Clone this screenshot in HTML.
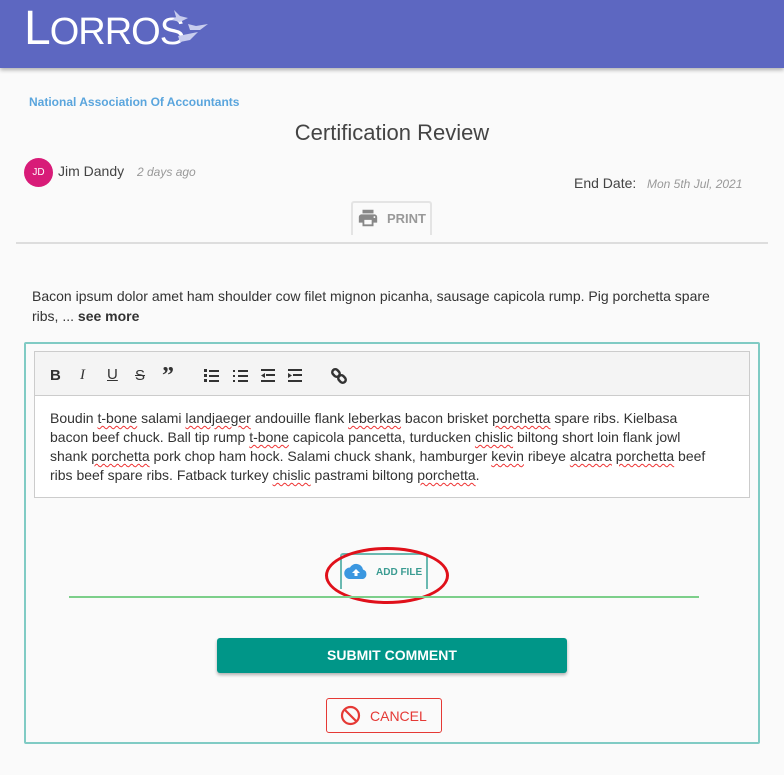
<!DOCTYPE html>
<html><head><meta charset="utf-8"><style>
*{box-sizing:border-box}
body{margin:0;width:784px;height:775px;background:#fafafa;font-family:"Liberation Sans",sans-serif;position:relative;overflow:hidden;color:#333}
.abs{position:absolute}
.hdr{left:0;top:0;width:784px;height:68px;background:#5d67c1;box-shadow:0 2px 4px rgba(0,0,0,.3)}
.logo{left:24px;top:8px;color:#fff;font-family:"Liberation Sans",sans-serif;font-size:38px;letter-spacing:-1px;line-height:42px}
.sp{text-decoration:underline wavy #e33;text-decoration-thickness:1px;text-underline-offset:2px}
</style></head><body>
<div class="abs hdr"></div>
<div class="abs logo"><span style="font-size:48px;font-weight:normal">L</span>ORROS</div>
<svg class="abs" style="left:168px;top:6px" width="46" height="40" viewBox="0 0 46 40" fill="#c8cdee">
<path d="M6 4 L12 10 L20 12 L12 16 L4 14 L8 11 Z"/><path d="M20 18 L28 20 L40 18 L32 24 L22 24 Z"/><path d="M10 30 L20 28 L30 26 L22 34 L12 36 Z"/></svg>
<div class="abs" style="left:29px;top:95px;font-size:12px;font-weight:bold;color:#5aa5dd">National Association Of Accountants</div>
<div class="abs" style="left:0;width:784px;top:120px;text-align:center;font-size:22px;color:#444">Certification Review</div>
<div class="abs" style="left:24px;top:158px;width:29px;height:29px;border-radius:50%;background:#d81b78;color:#fff;font-size:10px;line-height:29px;text-align:center">JD</div>
<div class="abs" style="left:58px;top:163px;font-size:14px;color:#444">Jim Dandy</div>
<div class="abs" style="left:137px;top:165px;font-size:12px;color:#999;font-style:italic">2 days ago</div>
<div class="abs" style="left:574px;top:175px;font-size:14px;color:#444">End Date:</div>
<div class="abs" style="left:647px;top:177px;font-size:12px;color:#999;font-style:italic">Mon 5th Jul, 2021</div>
<div class="abs" style="left:351px;top:201px;width:81px;height:34px;border:2px solid #e4e4e4;border-bottom:none;border-radius:3px 3px 0 0"></div>
<svg class="abs" style="left:357px;top:207px" width="22" height="22" viewBox="0 0 24 24" fill="#888"><path d="M19 8H5c-1.660 0-3 1.34-3 3v6h4v4h12v-4h4v-6c0-1.66-1.34-3-3-3zm-3 11H8v-5h8v5zm3-7c-.55 0-1-.45-1-1s.45-1 1-1 1 .45 1 1-.45 1-1 1zm-1-9H6v4h12V3z"/></svg>
<div class="abs" style="left:387px;top:211px;font-size:13px;color:#999;font-weight:bold">PRINT</div>
<div class="abs" style="left:16px;top:242px;width:752px;height:2px;background:#ddd"></div>
<div class="abs" style="left:32px;top:286px;width:700px;font-size:14px;line-height:20px;color:#333">Bacon ipsum dolor amet ham shoulder cow filet mignon picanha, sausage capicola rump. Pig porchetta spare ribs, ... <b>see more</b></div>
<div class="abs" style="left:24px;top:342px;width:736px;height:402px;border:2px solid #80cbc4;border-radius:2px"></div>
<div class="abs" style="left:34px;top:351px;width:716px;height:147px;border:1px solid #ccc;background:#fff"></div>
<div class="abs" style="left:35px;top:352px;width:714px;height:44px;background:#f4f4f4;border-bottom:1px solid #ccc"></div>
<div class="abs" style="left:50px;top:367px;font-size:15px;font-weight:bold;color:#333">B</div>
<div class="abs" style="left:80px;top:367px;font-size:15px;font-style:italic;color:#333;font-family:'Liberation Serif',serif">I</div>
<div class="abs" style="left:107px;top:366px;font-size:15px;text-decoration:underline;color:#333">U</div>
<div class="abs" style="left:135px;top:367px;font-size:15px;text-decoration:line-through;color:#333">S</div>
<div class="abs" style="left:162px;top:363px;font-size:24px;font-weight:bold;color:#333;font-family:'Liberation Serif',serif">”</div>
<svg class="abs" style="left:204px;top:368px" width="110" height="16" fill="#333">
<rect x="5" y="2" width="10" height="2"/><rect x="5" y="7" width="10" height="2"/><rect x="5" y="12" width="10" height="2"/><rect x="0" y="1" width="3" height="3"/><rect x="0" y="6" width="3" height="3"/><rect x="0" y="11" width="3" height="3"/>
<rect x="34" y="2" width="10" height="2"/><rect x="34" y="7" width="10" height="2"/><rect x="34" y="12" width="10" height="2"/><rect x="29" y="2" width="2" height="2"/><rect x="29" y="7" width="2" height="2"/><rect x="29" y="12" width="2" height="2"/>
<rect x="57" y="1" width="14" height="2"/><rect x="62" y="6" width="9" height="2"/><rect x="57" y="12" width="14" height="2"/><path d="M57 7.5 L61 5 V10Z"/>
<rect x="84" y="1" width="14" height="2"/><rect x="89" y="6" width="9" height="2"/><rect x="84" y="12" width="14" height="2"/><path d="M88 7.5 L84 5 V10Z"/></svg>
<svg class="abs" style="left:331px;top:368px" width="16" height="16" viewBox="0 0 16 16" fill="none" stroke="#333" stroke-width="2.5"><rect x="1" y="2" width="8" height="6" rx="3" transform="rotate(45 5 5)"/><rect x="7" y="8" width="8" height="6" rx="3" transform="rotate(45 11 11)"/></svg>
<div class="abs" style="left:50px;top:409px;width:668px;font-size:14px;line-height:19px;color:#333">Boudin <span class="sp">t-bone</span> salami <span class="sp">landjaeger</span> andouille flank <span class="sp">leberkas</span> bacon brisket <span class="sp">porchetta</span> spare ribs. Kielbasa bacon beef chuck. Ball tip rump <span class="sp">t-bone</span> capicola pancetta, turducken <span class="sp">chislic</span> biltong short loin flank jowl shank <span class="sp">porchetta</span> pork chop ham hock. Salami chuck shank, hamburger <span class="sp">kevin</span> ribeye <span class="sp">alcatra</span> <span class="sp">porchetta</span> beef ribs beef spare ribs. Fatback turkey <span class="sp">chislic</span> pastrami biltong <span class="sp">porchetta</span>.</div>
<div class="abs" style="left:340px;top:553px;width:88px;height:36px;border:2px solid #6ab9b1;border-bottom:none;border-radius:3px 3px 0 0"></div>
<svg class="abs" style="left:344px;top:562px" width="24" height="18" viewBox="0 0 24 18"><path d="M19 7.5A7 7 0 0 0 6 5.5 5.5 5.5 0 0 0 6 17h13a5 5 0 0 0 0-9.5z" fill="#3b97e0"/><path d="M12 7l-4 4h2.5v3h3v-3H16z" fill="#fff"/></svg>
<div class="abs" style="left:376px;top:567px;font-size:10px;font-weight:bold;color:#3a9b91">ADD FILE</div>
<div class="abs" style="left:325px;top:547px;width:124px;height:57px;border:3px solid #e0101a;border-radius:50%"></div>
<div class="abs" style="left:69px;top:596px;width:630px;height:2px;background:#7ccf8a"></div>
<div class="abs" style="left:217px;top:638px;width:350px;height:35px;background:#009688;border-radius:3px;box-shadow:0 2px 3px rgba(0,0,0,.3);color:#fff;font-weight:bold;font-size:14px;text-align:center;line-height:35px">SUBMIT COMMENT</div>
<div class="abs" style="left:326px;top:698px;width:116px;height:35px;border:1px solid #e53935;border-radius:3px"></div>
<svg class="abs" style="left:340px;top:705px" width="21" height="21" viewBox="0 0 21 21" fill="none" stroke="#e53935" stroke-width="2.2"><circle cx="10.5" cy="10.5" r="8.5"/><path d="M4.5 4.5l12 12"/></svg>
<div class="abs" style="left:370px;top:708px;font-size:14px;color:#e53935">CANCEL</div>
</body></html>
